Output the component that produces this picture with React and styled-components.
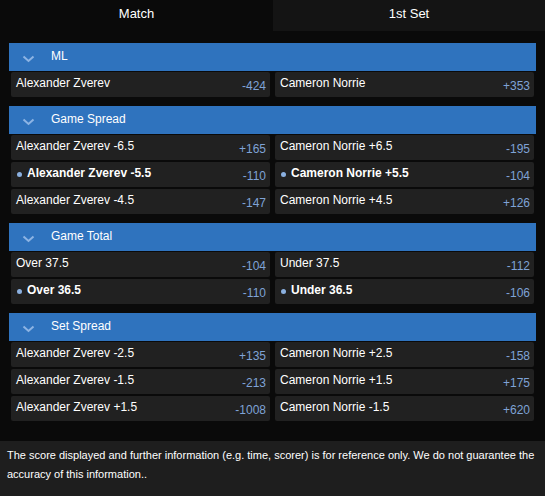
import React from 'react';
import styled, { createGlobalStyle } from 'styled-components';

const GlobalStyle = createGlobalStyle`
  html, body {
    margin: 0;
    padding: 0;
    background: #0a0a0a;
    font-family: "Liberation Sans", Arial, sans-serif;
  }
`;

const markets = [
  {
    title: 'ML',
    rows: [
      [{ name: 'Alexander Zverev', odds: '-424' }, { name: 'Cameron Norrie', odds: '+353' }],
    ],
  },
  {
    title: 'Game Spread',
    rows: [
      [{ name: 'Alexander Zverev -6.5', odds: '+165' }, { name: 'Cameron Norrie +6.5', odds: '-195' }],
      [{ name: 'Alexander Zverev -5.5', odds: '-110', main: true }, { name: 'Cameron Norrie +5.5', odds: '-104', main: true }],
      [{ name: 'Alexander Zverev -4.5', odds: '-147' }, { name: 'Cameron Norrie +4.5', odds: '+126' }],
    ],
  },
  {
    title: 'Game Total',
    rows: [
      [{ name: 'Over 37.5', odds: '-104' }, { name: 'Under 37.5', odds: '-112' }],
      [{ name: 'Over 36.5', odds: '-110', main: true }, { name: 'Under 36.5', odds: '-106', main: true }],
    ],
  },
  {
    title: 'Set Spread',
    rows: [
      [{ name: 'Alexander Zverev -2.5', odds: '+135' }, { name: 'Cameron Norrie +2.5', odds: '-158' }],
      [{ name: 'Alexander Zverev -1.5', odds: '-213' }, { name: 'Cameron Norrie +1.5', odds: '+175' }],
      [{ name: 'Alexander Zverev +1.5', odds: '-1008' }, { name: 'Cameron Norrie -1.5', odds: '+620' }],
    ],
  },
];

const Chevron = () => (
  <svg width="13" height="8" viewBox="0 0 13 8">
    <path d="M1.5 1.5 L6.5 6 L11.5 1.5" fill="none" stroke="#8db4e4" strokeWidth="2" />
  </svg>
);

export default function App() {
  return (
    <Page>
      <GlobalStyle />
      <Tabs>
        <Tab active>Match</Tab>
        <Tab>1st Set</Tab>
      </Tabs>
      <Markets>
        {markets.map(m => (
          <Section key={m.title}>
            <Header>
              <Chevron />
              <HeaderTitle>{m.title}</HeaderTitle>
            </Header>
            <Rows>
              {m.rows.map((row, i) => (
                <Row key={i}>
                  {row.map(cell => (
                    <Cell key={cell.name}>
                      <Name main={cell.main}>
                        {cell.main && <Dot />}
                        {cell.name}
                      </Name>
                      <Odds>{cell.odds}</Odds>
                    </Cell>
                  ))}
                </Row>
              ))}
            </Rows>
          </Section>
        ))}
      </Markets>
      <Footer>
        The score displayed and further information (e.g. time, scorer) is for reference only. We do not guarantee the accuracy of this information..
      </Footer>
    </Page>
  );
}

const Page = styled.div`
  width: 545px;
  min-height: 496px;
  display: flex;
  flex-direction: column;
  background: #0a0a0a;
`;
const Tabs = styled.div`
  display: grid;
  grid-template-columns: 273px 1fr;
  height: 31px;
`;
const Tab = styled.div`
  display: flex;
  align-items: center;
  justify-content: center;
  padding-bottom: 4px;
  box-sizing: border-box;
  color: #fff;
  font-size: 13px;
  background: ${props => props.active ? '#0a0a0a' : '#141414'};
`;
const Markets = styled.div`
  padding: 12px 9px 0;
  display: flex;
  flex-direction: column;
  gap: 7px;
`;
const Section = styled.div``;
const Header = styled.div`
  height: 28px;
  display: flex;
  align-items: center;
  padding-left: 13px;
  background: #2f73be;
  & svg {
    margin-top: 3px;
  }
`;
const HeaderTitle = styled.span`
  margin-left: 16px;
  color: #fff;
  font-size: 12px;
  margin-top: -2px;
`;
const Rows = styled.div`
  padding: 1px 2px 2px;
  display: flex;
  flex-direction: column;
  gap: 2px;
`;
const Row = styled.div`
  display: grid;
  grid-template-columns: 1fr 1fr;
  gap: 5px;
`;
const Cell = styled.div`
  height: 25px;
  display: flex;
  align-items: center;
  justify-content: space-between;
  padding: 0 4px 0 5px;
  background: #212121;
  border-radius: 2px;
`;
const Name = styled.span`
  display: flex;
  align-items: center;
  color: #fff;
  font-size: 12px;
  font-weight: ${props => props.main ? 'bold' : 'normal'};
  margin-top: -3px;
`;
const Dot = styled.span`
  width: 5px;
  height: 5px;
  border-radius: 50%;
  background: #8bb0e0;
  margin: 2px 5px 0 1px;
`;
const Odds = styled.span`
  color: #7fa3d6;
  font-size: 12px;
  margin-top: 2px;
`;
const Footer = styled.div`
  margin-top: 18px;
  flex: 1;
  background: #1e1e1e;
  color: #fff;
  font-size: 11px;
  line-height: 19px;
  padding: 5px 7px;
`;
